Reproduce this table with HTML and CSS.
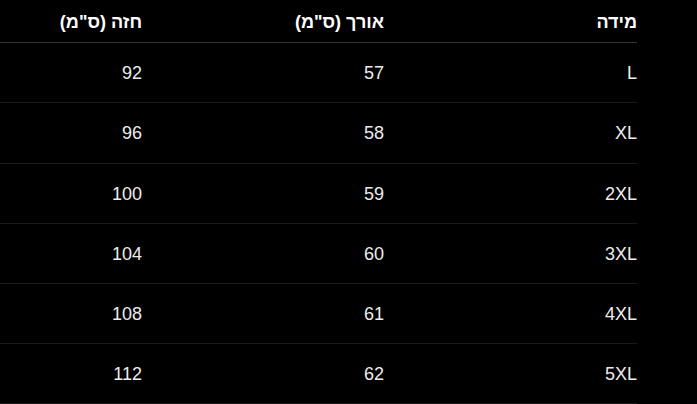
FILE: index.html
```html
<!DOCTYPE html>
<html lang="he" dir="rtl">
<head>
<meta charset="utf-8">
<link rel="stylesheet" href="styles.css">
</head>
<body>
<div class="wrap">
<table class="sizes">
<thead>
<tr><th class="c1">מידה</th><th class="c2">אורך (ס"מ)</th><th class="c3">חזה (ס"מ)</th></tr>
</thead>
<tbody>
<tr><td>L</td><td>57</td><td>92</td></tr>
<tr><td>XL</td><td>58</td><td>96</td></tr>
<tr><td>2XL</td><td>59</td><td>100</td></tr>
<tr><td>3XL</td><td>60</td><td>104</td></tr>
<tr><td>4XL</td><td>61</td><td>108</td></tr>
<tr><td>5XL</td><td>62</td><td>112</td></tr>
</tbody>
</table>
</div>
</body>
</html>
```
FILE: styles.css
```css
html, body {
  margin: 0;
  padding: 0;
  background: #000;
}
body {
  font-family: "Liberation Sans", "DejaVu Sans", sans-serif;
  color: #ececec;
  font-size: 18px;
}
.wrap {
  padding-right: 60px;
}
.sizes {
  width: 100%;
  border-collapse: collapse;
  table-layout: fixed;
}
.sizes th, .sizes td {
  text-align: right;
  padding: 21px 0 19px;
  line-height: 19.2px;
  border-bottom: 1px solid #1a1a1a;
}
.sizes th {
  font-weight: bold;
  color: #fff;
  padding: 13px 0 10px;
  border-bottom: 1px solid #333;
}
.c1 { width: 253px; }
.c2 { width: 242px; }
.c3 { width: auto; }
```
